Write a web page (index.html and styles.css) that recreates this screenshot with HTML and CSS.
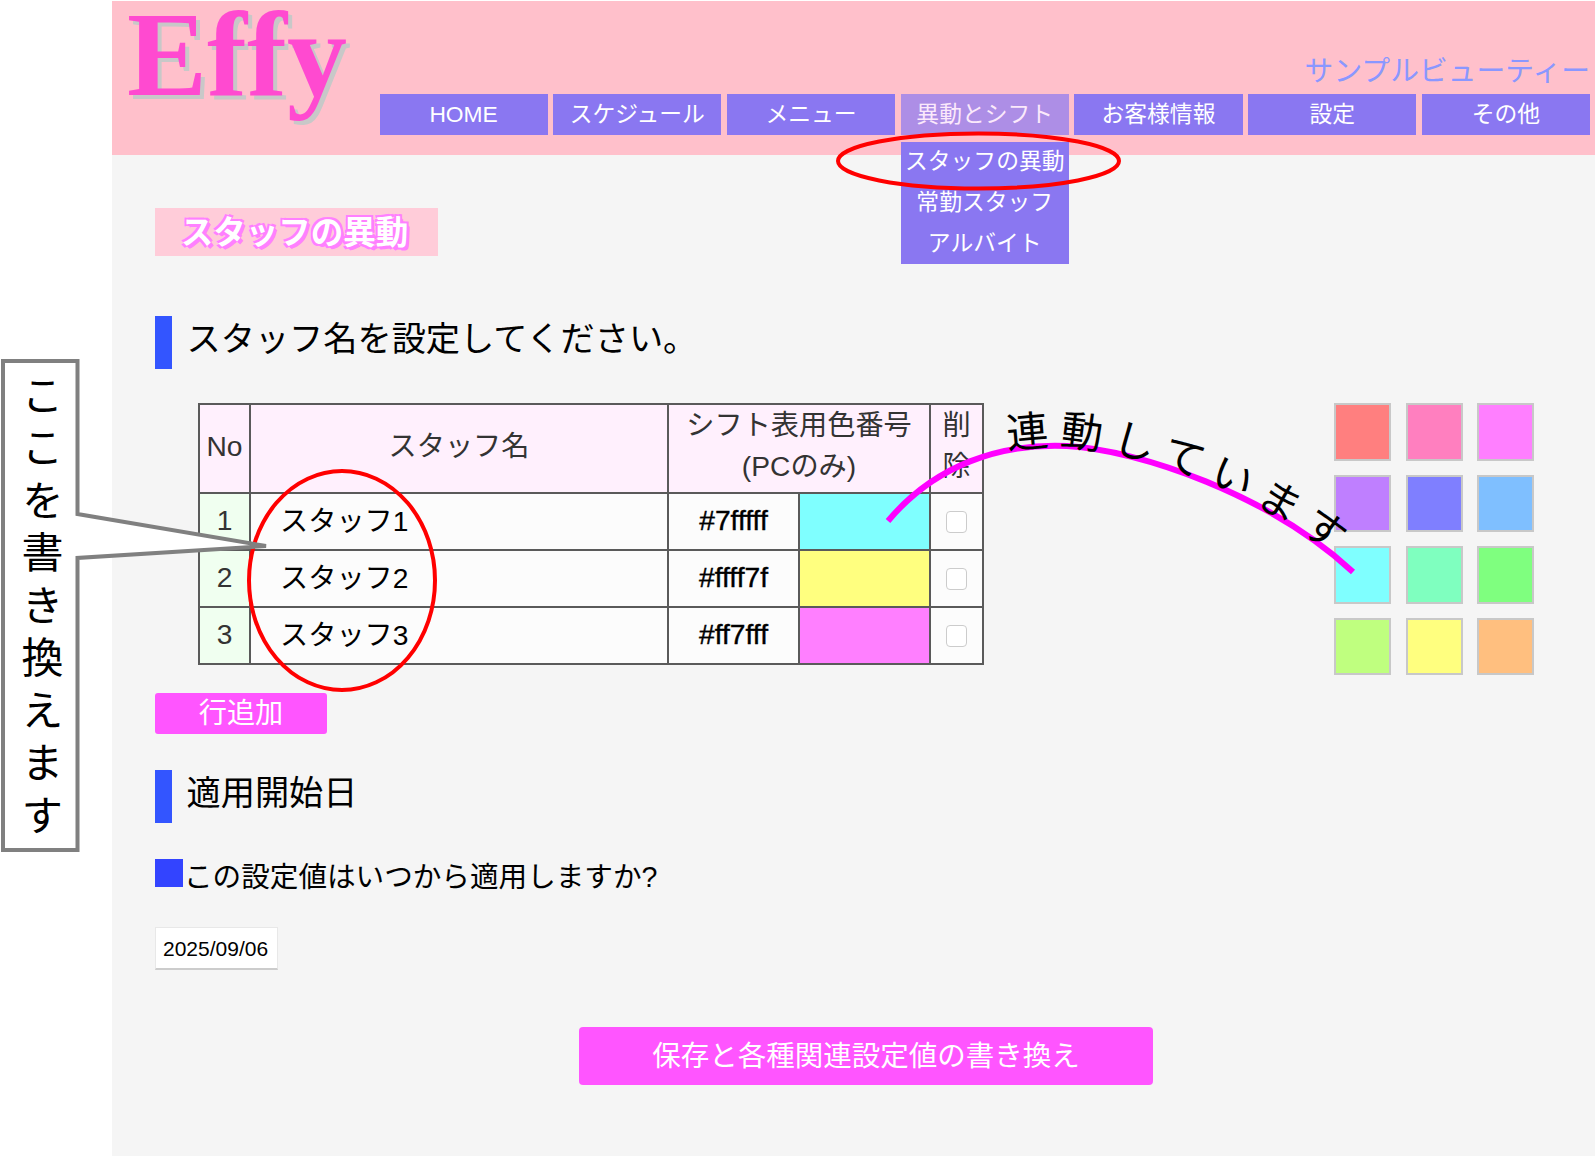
FILE: index.html
```html
<!DOCTYPE html>
<html lang="ja">
<head>
<meta charset="utf-8">
<title>スタッフの異動</title>
<link rel="stylesheet" href="styles.css">
</head>
<body>
<div class="page">
  <header class="hdr">
    <div class="logo">Effy</div>
    <div class="hdr-right">
      <div class="shop">サンプルビューティー</div>
      <nav class="nav">
        <div class="nav-item">HOME</div>
        <div class="nav-item">スケジュール</div>
        <div class="nav-item">メニュー</div>
        <div class="nav-item nav-active">異動とシフト
          <div class="dropdown">
            <div class="drop-item">スタッフの異動</div>
            <div class="drop-item">常勤スタッフ</div>
            <div class="drop-item">アルバイト</div>
          </div>
        </div>
        <div class="nav-item">お客様情報</div>
        <div class="nav-item">設定</div>
        <div class="nav-item">その他</div>
      </nav>
    </div>
  </header>
  <main class="main">
    <h1 class="title">スタッフの異動</h1>
    <h2 class="heading heading-first"><span class="bar"></span><span class="heading-text">スタッフ名を設定してください。</span></h2>
    <div class="table-row">
      <table class="staff">
        <colgroup>
          <col class="c-no"><col class="c-name"><col class="c-code"><col class="c-swatch"><col class="c-del">
        </colgroup>
        <thead>
          <tr>
            <th>No</th>
            <th>スタッフ名</th>
            <th colspan="2">シフト表用色番号<br>(PCのみ)</th>
            <th>削除</th>
          </tr>
        </thead>
        <tbody>
          <tr>
            <td class="no">1</td><td class="name">スタッフ1</td><td class="code">#7fffff</td><td class="sw-cyan"></td>
            <td class="del"><input class="chk" type="checkbox"></td>
          </tr>
          <tr>
            <td class="no">2</td><td class="name">スタッフ2</td><td class="code">#ffff7f</td><td class="sw-yellow"></td>
            <td class="del"><input class="chk" type="checkbox"></td>
          </tr>
          <tr>
            <td class="no">3</td><td class="name">スタッフ3</td><td class="code">#ff7fff</td><td class="sw-magenta"></td>
            <td class="del"><input class="chk" type="checkbox"></td>
          </tr>
        </tbody>
      </table>
      <div class="palette">
        <div class="chip p1"></div><div class="chip p2"></div><div class="chip p3"></div>
        <div class="chip p4"></div><div class="chip p5"></div><div class="chip p6"></div>
        <div class="chip p7"></div><div class="chip p8"></div><div class="chip p9"></div>
        <div class="chip p10"></div><div class="chip p11"></div><div class="chip p12"></div>
      </div>
    </div>
    <div class="add-btn">行追加</div>
    <h2 class="heading heading-second"><span class="bar"></span><span class="heading-text">適用開始日</span></h2>
    <div class="question"><span class="square"></span><span class="q-text">この設定値はいつから適用しますか?</span></div>
    <div class="date">2025/09/06</div>
    <div class="save-btn">保存と各種関連設定値の書き換え</div>
  </main>
</div>

<svg class="notes" width="1595" height="1157" viewBox="0 0 1595 1157">
  <ellipse class="ring" cx="978.5" cy="161" rx="140.5" ry="27.5"/>
  <ellipse class="ring" cx="342" cy="580.5" rx="93" ry="109.5"/>
  <path class="callout" d="M3 361H77.5V514L266 546L77.5 558V850H3Z"/>
  <path id="curve" class="curve" d="M888 521C935 465 1000 443 1067 446C1140 450 1270 495 1353 572"/>
  <text class="curve-text"><textPath href="#curve" startOffset="142">連動しています</textPath></text>
</svg>
<div class="callout-text">ここを書き換えます</div>
</body>
</html>
```

FILE: styles.css
```css
* { box-sizing: border-box; }
html, body { margin: 0; padding: 0; }
body {
  background: #fff;
  width: 1595px;
  height: 1157px;
  overflow: hidden;
  position: relative;
  font-family: "Liberation Sans", "Noto Sans CJK JP", sans-serif;
  color: #000;
}
.page { margin: 1px 0 0 112px; background: #f5f5f5; }

.hdr { display: flex; height: 154px; background: #ffc0cb; }
.logo {
  width: 267.5px;
  height: 130px;
  padding-left: 15px;
  font-family: "Liberation Serif", serif;
  font-weight: 700;
  font-size: 120px;
  line-height: 108px;
  color: #ff4ad0;
  text-shadow: 4px 4px 0 #c8c8c8;
}
.hdr-right { width: 1215.5px; padding-right: 5px; }
.shop {
  margin-top: 48px;
  height: 40px;
  line-height: 44px;
  text-align: right;
  font-size: 28.8px;
  color: #8a97ff;
}
.nav {
  margin-top: 5px;
  display: grid;
  grid-template-columns: repeat(7, 1fr);
  column-gap: 5.5px;
}
.nav-item {
  position: relative;
  height: 41px;
  line-height: 40px;
  text-align: center;
  font-size: 22.8px;
  color: #fff;
  background: #8a77f1;
}
.nav-active { background: #ad8ee6; color: #fbe9fb; }
.dropdown {
  position: absolute;
  left: 0;
  right: 0;
  top: 48px;
  height: 122px;
  background: #8a77f1;
  color: #fff;
}
.drop-item { height: 41px; line-height: 38px; }

.main { padding: 53px 0 71px 43px; }
.title {
  margin: 0;
  width: 283px;
  height: 48px;
  line-height: 50px;
  padding-right: 4px;
  background: #ffccd9;
  text-align: center;
  font-size: 32.5px;
  font-weight: 700;
  color: #fff;
  text-shadow: -2px -2px 0 #ff80ff, 2px -2px 0 #ff80ff, -2px 2px 0 #ff80ff, 2px 2px 0 #ff80ff, 3px 3px 0 #ff80ff;
}
.heading { display: flex; margin: 0; font-size: 34.2px; font-weight: 400; }
.heading-first { margin-top: 60px; }
.heading-second { margin-top: 36.5px; }
.bar { width: 17px; height: 53px; background: #3355ff; }
.heading-text { margin-left: 14.5px; line-height: 47px; }

.table-row { display: flex; align-items: flex-start; margin: 34px 0 0 43px; }
.staff {
  width: 784px;
  table-layout: fixed;
  border-collapse: collapse;
  font-size: 28.2px;
}
.c-no { width: 51px; }
.c-name { width: 418px; }
.c-code, .c-swatch { width: 131px; }
.c-del { width: 53px; }
.staff th, .staff td { border: 2px solid #5a5a5a; padding: 0; text-align: center; }
.staff th {
  height: 89px;
  padding-bottom: 5px;
  background: #fff0fd;
  color: #333;
  font-weight: 400;
  line-height: 41px;
}
.staff td { height: 57px; background: #fcfcfc; }
.staff td.no { padding-bottom: 2px; background: #f0fff0; color: #333; }
.staff td.name { text-align: left; padding: 0 0 6px 29px; }
.staff td.code { padding-bottom: 2px; -webkit-text-stroke: 0.4px #000; }
.staff td.sw-cyan { background: #7fffff; }
.staff td.sw-yellow { background: #ffff7f; }
.staff td.sw-magenta { background: #ff7fff; }
.staff td.del { line-height: 0; padding-right: 1px; }
.chk {
  appearance: none;
  width: 21px;
  height: 22px;
  margin: 0;
  background: #fff;
  border: 1px solid #ccc;
  border-radius: 4px;
}

.palette {
  margin-left: 350px;
  display: grid;
  grid-template-columns: repeat(3, 57px);
  grid-auto-rows: 57.5px;
  gap: 14px 14.5px;
}
.chip { border: 2px solid #c8c8c8; }
.p1 { background: #ff7f7f; }
.p2 { background: #ff7fbf; }
.p3 { background: #ff7fff; }
.p4 { background: #bf7fff; }
.p5 { background: #7f7fff; }
.p6 { background: #7fbfff; }
.p7 { background: #7fffff; }
.p8 { background: #7fffbf; }
.p9 { background: #7fff7f; }
.p10 { background: #bfff7f; }
.p11 { background: #ffff7f; }
.p12 { background: #ffbf7f; }

.add-btn {
  margin-top: 18px;
  width: 172px;
  height: 40.5px;
  line-height: 40px;
  text-align: center;
  font-size: 28.2px;
  color: #fff;
  background: #ff55ff;
  border-radius: 3px;
}
.question { display: flex; margin-top: 36px; height: 28px; font-size: 28.6px; }
.square { width: 28px; height: 28px; background: #3344ff; }
.q-text { margin-left: 1px; line-height: 36px; white-space: nowrap; }
.date {
  margin-top: 40px;
  width: 123px;
  height: 43px;
  padding-left: 7px;
  line-height: 41px;
  font-size: 21px;
  background: #fff;
  border: 1px solid #e8e8e8;
  border-bottom: 2px solid #ccc;
}
.save-btn {
  margin: 57px 0 0 424px;
  width: 574px;
  height: 58px;
  line-height: 59px;
  text-align: center;
  font-size: 28.5px;
  color: #fff;
  background: #ff55ff;
  border-radius: 4px;
}

.notes { position: absolute; left: 0; top: 0; pointer-events: none; }
.ring { fill: none; stroke: #ff0000; stroke-width: 4; }
.callout { fill: #fff; stroke: #808080; stroke-width: 4; }
.curve { fill: none; stroke: #ff00ff; stroke-width: 6; }
.curve-text {
  font-family: "Noto Sans CJK JP", sans-serif;
  font-size: 42px;
  letter-spacing: 9.5px;
  fill: #000;
}
.callout-text {
  position: absolute;
  left: 20px;
  top: 374px;
  writing-mode: vertical-rl;
  font-family: "Noto Sans CJK JP", sans-serif;
  font-size: 42px;
  line-height: 44px;
  letter-spacing: 10.5px;
  white-space: nowrap;
}
```
